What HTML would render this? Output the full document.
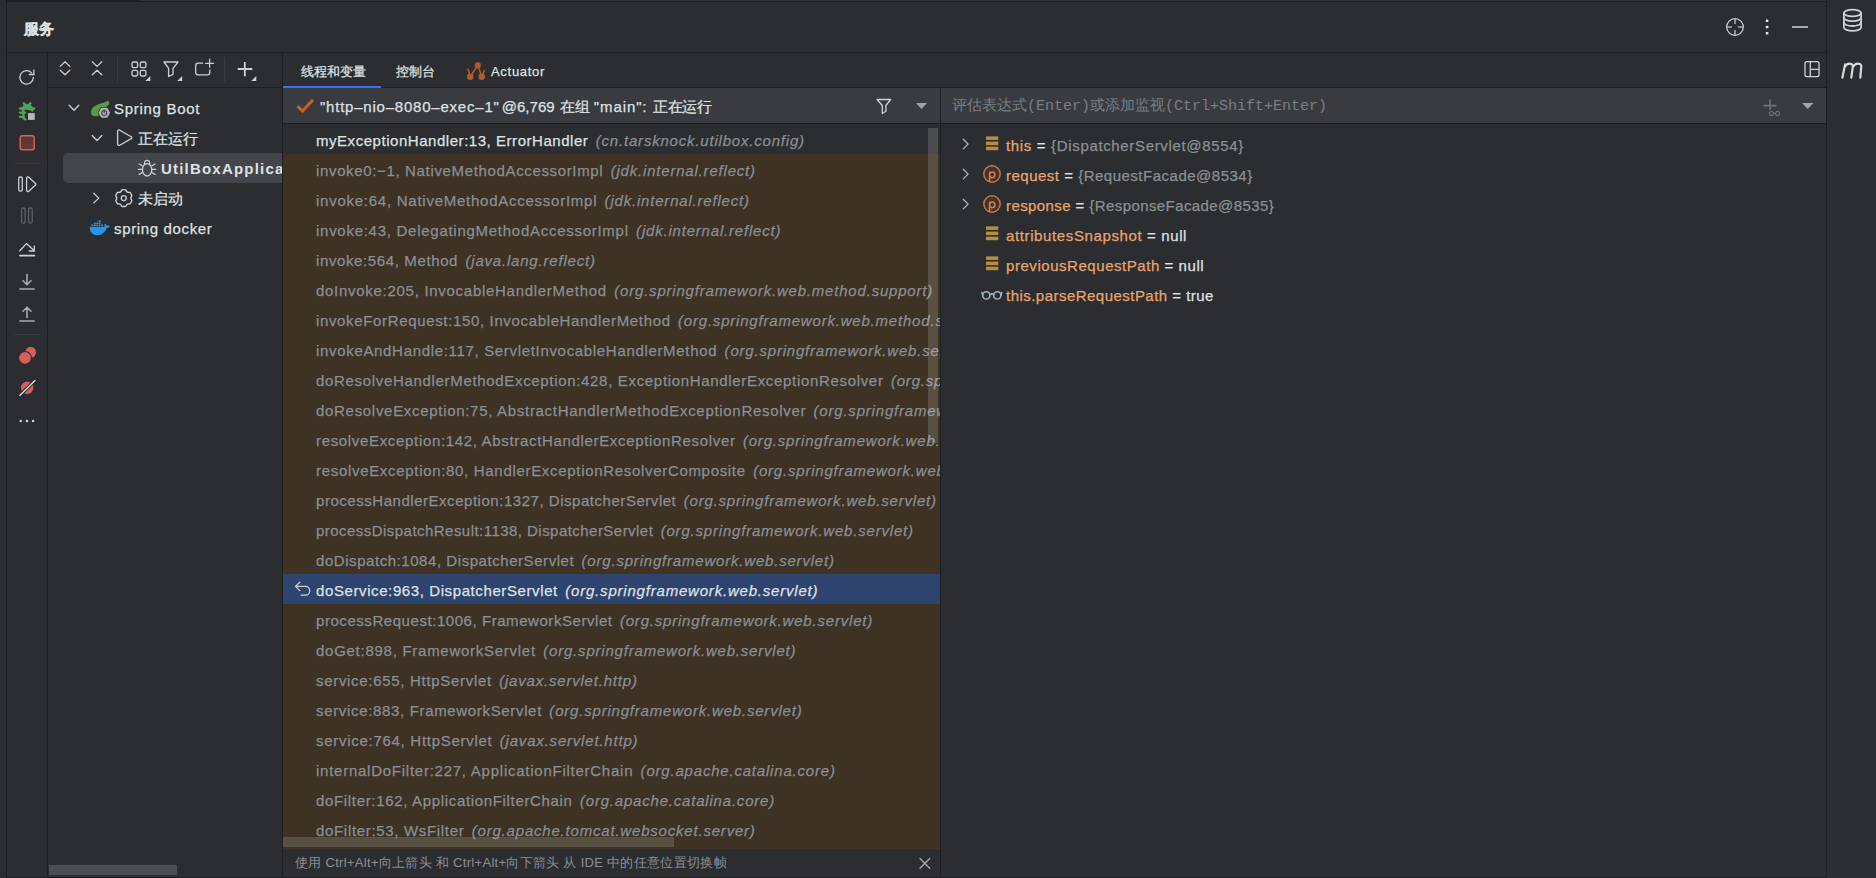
<!DOCTYPE html>
<html><head><meta charset="utf-8">
<style>
*{margin:0;padding:0;box-sizing:border-box}
html,body{width:1876px;height:878px;overflow:hidden;background:#2b2d30;font-family:"Liberation Sans",sans-serif;color:#dfe1e5}
.a{position:absolute}
.ln{position:absolute;background:#1e1f22}
.row{position:absolute;left:0;height:30px;width:657px;white-space:nowrap;font-size:15px;line-height:33px;padding-left:33px;letter-spacing:0.52px;-webkit-text-stroke:0.25px currentColor}
.lib{background:#3d3224;color:#8b8f95}
.pk{font-style:italic;letter-spacing:0.8px;margin-left:2.7px}
.sel{background:#2e436e;color:#dfe1e5}
.pk{color:#8b8f95}
.sel .pk{color:#dfe1e5}
.vr{position:absolute;left:65px;height:30px;line-height:30px;font-size:15px;white-space:nowrap;letter-spacing:0.55px;-webkit-text-stroke:0.25px currentColor}
.tl{-webkit-text-stroke:0.25px currentColor}
.vn{color:#e8a46e}
.vg{color:#8b8f95}
svg{position:absolute;overflow:visible}
.th{top:95px;font-size:15px;line-height:24px;white-space:nowrap;-webkit-text-stroke:0.25px currentColor}
</style></head><body>
<!-- borders -->
<div class="ln" style="left:6px;top:0;width:134px;height:2px"></div>
<div class="ln" style="left:140px;top:1px;width:1686px;height:1px"></div>
<div class="a" style="left:140px;top:0;width:1686px;height:1px;background:#323337"></div>
<div class="ln" style="left:6px;top:0;width:1px;height:878px"></div>
<div class="ln" style="left:1826px;top:0;width:1px;height:878px"></div>
<div class="ln" style="left:6px;top:52px;width:1820px;height:1px"></div>
<div class="ln" style="left:47px;top:52px;width:1px;height:826px"></div>
<div class="ln" style="left:47px;top:87px;width:235px;height:1px"></div>
<div class="ln" style="left:282px;top:52px;width:1px;height:826px"></div>
<div class="ln" style="left:282px;top:87px;width:1544px;height:1px"></div>
<div class="ln" style="left:940px;top:88px;width:1px;height:790px"></div>
<div class="ln" style="left:6px;top:877px;width:1820px;height:1px"></div>

<!-- header -->
<div class="a" style="left:23.5px;top:17.5px;font-size:14.5px;font-weight:bold;line-height:22px;-webkit-text-stroke:0.3px #dfe1e5">服务</div>

<!-- thread header -->
<div class="a" style="left:283px;top:88px;width:657px;height:35px;background:#393b40"></div>
<div class="ln" style="left:283px;top:123px;width:657px;height:1px"></div>
<!-- eval header -->
<div class="a" style="left:941px;top:88px;width:885px;height:35px;background:#393b40"></div>
<div class="ln" style="left:941px;top:123px;width:885px;height:1px"></div>

<!-- tabs -->
<div class="a" style="left:283px;top:86px;width:98px;height:2px;background:#3574f0"></div>
<div class="a tl" style="left:301px;top:62px;font-size:13px;line-height:20px">线程和变量</div>
<div class="a tl" style="left:396px;top:62px;font-size:13px;line-height:20px">控制台</div>
<div class="a tl" style="left:491px;top:62px;font-size:13px;line-height:20px;letter-spacing:0.7px">Actuator</div>

<!-- thread text -->
<div class="a th" style="left:320px;letter-spacing:0.78px">"http–nio–8080–exec–1"</div>
<div class="a th" style="left:501.7px;letter-spacing:0.05px">@6,769</div>
<div class="a th" style="left:559.8px">在组</div>
<div class="a th" style="left:593.8px;letter-spacing:0.9px">"main":</div>
<div class="a th" style="left:653px;letter-spacing:-0.5px">正在运行</div>

<!-- eval placeholder -->
<div class="a" style="left:952px;top:96px;font-size:15px;line-height:22px;color:#7a7e85;white-space:nowrap;font-family:'Liberation Mono',monospace">评估表达式(Enter)或添加监视(Ctrl+Shift+Enter)</div>

<!-- frames -->
<div class="a" id="frames" style="left:283px;top:124px;width:657px;height:725px;overflow:hidden">
<!--F-->
<div class="row " style="top:0px"><span style="letter-spacing:0.541px">myExceptionHandler:13, ErrorHandler</span> <span class="pk">(cn.tarsknock.utilbox.config)</span></div>
<div class="row lib" style="top:30px"><span style="letter-spacing:0.651px">invoke0:&minus;1, NativeMethodAccessorImpl</span> <span class="pk">(jdk.internal.reflect)</span></div>
<div class="row lib" style="top:60px"><span style="letter-spacing:0.746px">invoke:64, NativeMethodAccessorImpl</span> <span class="pk">(jdk.internal.reflect)</span></div>
<div class="row lib" style="top:90px"><span style="letter-spacing:0.728px">invoke:43, DelegatingMethodAccessorImpl</span> <span class="pk">(jdk.internal.reflect)</span></div>
<div class="row lib" style="top:120px"><span style="letter-spacing:0.620px">invoke:564, Method</span> <span class="pk">(java.lang.reflect)</span></div>
<div class="row lib" style="top:150px"><span style="letter-spacing:0.714px">doInvoke:205, InvocableHandlerMethod</span> <span class="pk">(org.springframework.web.method.support)</span></div>
<div class="row lib" style="top:180px"><span style="letter-spacing:0.650px">invokeForRequest:150, InvocableHandlerMethod</span> <span class="pk">(org.springframework.web.method.support)</span></div>
<div class="row lib" style="top:210px"><span style="letter-spacing:0.675px">invokeAndHandle:117, ServletInvocableHandlerMethod</span> <span class="pk">(org.springframework.web.servlet.mvc.method.annotation)</span></div>
<div class="row lib" style="top:240px"><span style="letter-spacing:0.675px">doResolveHandlerMethodException:428, ExceptionHandlerExceptionResolver</span> <span class="pk">(org.springframework.web.servlet.mvc.method.annotation)</span></div>
<div class="row lib" style="top:270px"><span style="letter-spacing:0.695px">doResolveException:75, AbstractHandlerMethodExceptionResolver</span> <span class="pk">(org.springframework.web.servlet.handler)</span></div>
<div class="row lib" style="top:300px"><span style="letter-spacing:0.667px">resolveException:142, AbstractHandlerExceptionResolver</span> <span class="pk">(org.springframework.web.servlet.handler)</span></div>
<div class="row lib" style="top:330px"><span style="letter-spacing:0.686px">resolveException:80, HandlerExceptionResolverComposite</span> <span class="pk">(org.springframework.web.servlet.handler)</span></div>
<div class="row lib" style="top:360px"><span style="letter-spacing:0.535px">processHandlerException:1327, DispatcherServlet</span> <span class="pk">(org.springframework.web.servlet)</span></div>
<div class="row lib" style="top:390px"><span style="letter-spacing:0.461px">processDispatchResult:1138, DispatcherServlet</span> <span class="pk">(org.springframework.web.servlet)</span></div>
<div class="row lib" style="top:420px"><span style="letter-spacing:0.556px">doDispatch:1084, DispatcherServlet</span> <span class="pk">(org.springframework.web.servlet)</span></div>
<div class="row sel" style="top:450px"><span style="letter-spacing:0.601px">doService:963, DispatcherServlet</span> <span class="pk">(org.springframework.web.servlet)</span></div>
<div class="row lib" style="top:480px"><span style="letter-spacing:0.556px">processRequest:1006, FrameworkServlet</span> <span class="pk">(org.springframework.web.servlet)</span></div>
<div class="row lib" style="top:510px"><span style="letter-spacing:0.732px">doGet:898, FrameworkServlet</span> <span class="pk">(org.springframework.web.servlet)</span></div>
<div class="row lib" style="top:540px"><span style="letter-spacing:0.690px">service:655, HttpServlet</span> <span class="pk">(javax.servlet.http)</span></div>
<div class="row lib" style="top:570px"><span style="letter-spacing:0.663px">service:883, FrameworkServlet</span> <span class="pk">(org.springframework.web.servlet)</span></div>
<div class="row lib" style="top:600px"><span style="letter-spacing:0.716px">service:764, HttpServlet</span> <span class="pk">(javax.servlet.http)</span></div>
<div class="row lib" style="top:630px"><span style="letter-spacing:0.748px">internalDoFilter:227, ApplicationFilterChain</span> <span class="pk">(org.apache.catalina.core)</span></div>
<div class="row lib" style="top:660px"><span style="letter-spacing:0.666px">doFilter:162, ApplicationFilterChain</span> <span class="pk">(org.apache.catalina.core)</span></div>
<div class="row lib" style="top:690px"><span style="letter-spacing:0.675px">doFilter:53, WsFilter</span> <span class="pk">(org.apache.tomcat.websocket.server)</span></div>
<div class="row lib" style="top:720px"><span style="letter-spacing:0.620px">doFilter:189, ApplicationFilterChain</span> <span class="pk">(org.apache.catalina.core)</span></div>
<!--/F-->
</div>

<div class="a" style="left:928px;top:128px;width:10px;height:315px;background:rgba(255,255,255,0.15)"></div>
<div class="a" style="left:283px;top:837px;width:391px;height:10px;background:rgba(255,255,255,0.15)"></div>
<!-- hint -->
<div class="a" style="left:295px;top:853px;font-size:13px;line-height:20px;color:#8b8f95;white-space:nowrap;letter-spacing:0.3px">使用 Ctrl+Alt+向上箭头 和 Ctrl+Alt+向下箭头 从 IDE 中的任意位置切换帧</div>

<!-- tree -->
<div class="a" style="left:63px;top:153px;width:219px;height:30px;background:#43454a;border-radius:5px 0 0 5px"></div>
<div class="a tl" style="left:114px;top:94px;font-size:15px;line-height:30px;letter-spacing:0.7px;white-space:nowrap">Spring Boot</div>
<div class="a tl" style="left:138px;top:124px;font-size:15px;line-height:30px;white-space:nowrap">正在运行</div>
<div class="a" style="left:161px;top:153px;width:121px;overflow:hidden;font-size:15px;line-height:32px;font-weight:bold;letter-spacing:1.2px;white-space:nowrap">UtilBoxApplication</div>
<div class="a tl" style="left:138px;top:184px;font-size:15px;line-height:30px;white-space:nowrap">未启动</div>
<div class="a tl" style="left:114px;top:214px;font-size:15px;line-height:30px;letter-spacing:0.65px;white-space:nowrap">spring docker</div>
<div class="a" style="left:49px;top:865px;width:128px;height:10px;background:#4b4d50"></div>

<!-- variables -->
<div class="a" id="vars" style="left:941px;top:124px;width:885px;height:400px">
<div class="vr" style="top:7px;letter-spacing:0.66px"><span class="vn">this</span> = <span class="vg">{DispatcherServlet@8554}</span></div>
<div class="vr" style="top:37px;letter-spacing:0.5px"><span class="vn">request</span> = <span class="vg">{RequestFacade@8534}</span></div>
<div class="vr" style="top:67px;letter-spacing:0.41px"><span class="vn">response</span> = <span class="vg">{ResponseFacade@8535}</span></div>
<div class="vr" style="top:97px;letter-spacing:0.62px"><span class="vn">attributesSnapshot</span> = null</div>
<div class="vr" style="top:127px"><span class="vn">previousRequestPath</span> = null</div>
<div class="vr" style="top:157px;letter-spacing:0.47px"><span class="vn">this.parseRequestPath</span> = true</div>
</div>

<svg class="ic" width="1876" height="878" viewBox="0 0 1876 878" style="position:absolute;left:0;top:0;pointer-events:none" fill="none" stroke-linecap="round" stroke-linejoin="round">
<g stroke="#ced0d6" stroke-width="1.3">
<!-- header crosshair -->
<circle cx="1735" cy="27" r="8.3"/>
<path d="M1735 19v5M1735 30v5M1727 27h5M1738 27h5" stroke="#a8abb0" stroke-width="1.6" stroke-linecap="butt"/>
</g>
<g fill="#dfe1e5">
<rect x="1765.8" y="19.5" width="2.6" height="2.6" rx="0.6"/>
<rect x="1765.8" y="25.7" width="2.6" height="2.6" rx="0.6"/>
<rect x="1765.8" y="32" width="2.6" height="2.6" rx="0.6"/>
</g>
<rect x="1792" y="26" width="16" height="2" fill="#a8abb0"/>
<!-- database -->
<g stroke="#ced0d6" stroke-width="1.8">
<ellipse cx="1852.5" cy="13" rx="8.6" ry="3.3"/>
<path d="M1843.9 13v14.5c0 1.9 3.9 3.4 8.6 3.4s8.6-1.5 8.6-3.4V13"/>
<path d="M1843.9 17.8c0 1.9 3.9 3.4 8.6 3.4s8.6-1.5 8.6-3.4M1843.9 22.6c0 1.9 3.9 3.4 8.6 3.4s8.6-1.5 8.6-3.4"/>
</g>
<!-- m -->
<path d="M1842.4 77.6L1845.1 64.3M1844.5 67.2c1.4-2.6 3.3-3.6 5.2-3.6c2.5 0 3.5 1.5 3 4L1851.3 77.6M1852.8 67c1.4-2.4 3.3-3.4 5.2-3.4c2.6 0 3.7 1.6 3.2 4.1L1860.3 77.6" stroke="#d6d8dc" stroke-width="2.2"/>

<!-- left toolbar -->
<g stroke="#ced0d6" stroke-width="1.3">
<path d="M33.3 77.5a6.7 6.7 0 1 1-1.7-4.6"/>
<path d="M33.9 69.9v4.6h-4.6" stroke-linejoin="miter"/>
</g>
<!-- debug green bug -->
<g stroke="#4fa557" stroke-width="2.3" fill="none" stroke-linecap="round">
<path d="M23.8 103.3L26.2 105.6M30.4 103.3L28 105.6"/>
<path d="M22.4 109.6c0-2.6 2.2-4.2 4.8-4.2s5 1.6 5 4.2v1" fill="#4fa557"/>
<path d="M23.4 109v8c0 1.3.9 2.1 2.2 2.5"/>
<path d="M19.9 108.5h2.8M31.8 108.5h2.4M19.9 112.6h5.3M19.9 116.8h3.8"/>
</g>
<rect x="28" y="113.1" width="6.7" height="6.8" fill="#b4b6ba"/>
<!-- stop -->
<rect x="20.2" y="135.8" width="14" height="14" rx="2.2" fill="#5e3838" stroke="#db5c5c" stroke-width="1.5"/>
<path d="M15 163.5h25" stroke="#393b40" stroke-width="1"/>
<!-- resume -->
<g stroke="#ced0d6" stroke-width="1.3">
<rect x="18.7" y="177" width="3.6" height="14.2" rx="1.6"/>
<path d="M26.6 178.2c0-1.1 1-1.6 1.9-1.1l7 6.4c.6.6.6 1 0 1.5l-7 6.4c-.9.6-1.9.1-1.9-1.1z"/>
</g>
<g stroke="#5f6166" stroke-width="1.3">
<rect x="21.6" y="208" width="3.6" height="15.2" rx="1.6"/>
<rect x="28.6" y="208" width="3.6" height="15.2" rx="1.6"/>
</g>
<!-- step over -->
<g stroke="#ced0d6" stroke-width="1.3">
<path d="M19.8 250.8l6.6-7.2l7.6 7"/>
<path d="M34.3 246v5h-5" stroke-linejoin="miter"/>
<path d="M20 255.6h14.3" stroke-width="1.8"/>
</g>
<!-- step into / out -->
<g stroke="#a8abb0" stroke-width="1.6">
<path d="M27 274.5v10M23 280.7l4 4l4-4M20 289h14.2"/>
<path d="M27 317.5v-10M23 311.2l4-4l4 4M20 321h14.2"/>
</g>
<path d="M15 334.5h25" stroke="#393b40" stroke-width="1"/>
<!-- breakpoints -->
<circle cx="30.6" cy="352.3" r="5.5" fill="#db5c5c"/>
<circle cx="25" cy="357.9" r="7" fill="#2b2d30"/>
<circle cx="25" cy="357.9" r="5.9" fill="#db5c5c"/>
<circle cx="27.1" cy="387.8" r="6.2" fill="#db5c5c"/>
<path d="M19.8 395.5L35 380.5" stroke="#2b2d30" stroke-width="3.4"/>
<path d="M19.8 395.5L35 380.5" stroke="#dfe1e5" stroke-width="1.3"/>
<g fill="#ced0d6"><circle cx="20.8" cy="421" r="1.3"/><circle cx="27" cy="421" r="1.3"/><circle cx="33.1" cy="421" r="1.3"/></g>

<!-- tree toolbar -->
<g stroke="#ced0d6" stroke-width="1.3">
<path d="M60.2 66.4L65 61.8l4.8 4.6M60.2 70.3L65 74.8l4.8-4.5"/>
<path d="M92.3 61.8L97 66.4l4.8-4.6M92.3 74.8L97 70.3l4.8 4.5"/>
<rect x="132" y="62" width="5.6" height="5.6" rx="1.4"/>
<rect x="140.3" y="62" width="5.6" height="5.6" rx="1.4"/>
<rect x="132" y="70.4" width="5.6" height="5.6" rx="1.4"/>
<rect x="140.3" y="70.4" width="5.6" height="5.6" rx="1.4"/>
<path d="M164 62h14l-5 6.4v5.9l-4.4 2.2v-8.1z"/>
<path d="M202.6 63.2h-4.6c-1.3 0-2.3 1-2.3 2.3v7.1c0 1.3 1 2.3 2.3 2.3h9.5c1.3 0 2.3-1 2.3-2.3v-2.8M209.6 59.2v8M205.6 63.3h8"/>
<path d="M244.8 62v14.2M237.7 69h14.6" stroke-width="1.8" stroke-linecap="butt"/>
</g>
<g fill="#ced0d6"><path d="M150.3 76v5h-5z"/><path d="M182.2 76v5h-5z"/><path d="M256.3 76v5h-5z"/></g>
<path d="M117.5 57.5v24M224.5 57.5v24" stroke="#393b40" stroke-width="1"/>

<!-- tree -->
<g stroke="#ced0d6" stroke-width="1.3">
<path d="M69.2 105.3l4.8 5l4.8-5"/>
<path d="M92.2 135.5l4.8 5l4.8-5"/>
<path d="M117.6 131.5c0-1.3 1.2-1.9 2.2-1.3l11.4 6.6c.9.5.9 1.3 0 1.8l-11.4 6.6c-1 .6-2.2 0-2.2-1.3z"/>
<path d="M93.8 193.3l5 4.8l-5 4.8"/>
</g>
<!-- spring leaf -->
<path d="M108 100.5C104 103.5 99 103.3 95 106C92 108 90.8 110.5 91 113C91.3 115.3 93.2 116.5 96 116.3L100.5 115.5L103 107.5C106.5 107 109 105.5 109.2 103C109.3 102 108.8 101.2 108 100.5Z" fill="#5b9a42"/>
<path d="M110.8 112.8l-3.3 5.7h-6.6l-3.3-5.7l3.3-5.7h6.6z" fill="#2b2d30"/>
<path d="M110.1 112.8l-2.9 5h-5.9l-2.9-5l2.9-5h5.9z" fill="#a9b4bd"/>
<circle cx="104.2" cy="113" r="2.5" stroke="#3f4245" stroke-width="1.1" fill="none"/>
<path d="M104.2 109.9v2.8" stroke="#3f4245" stroke-width="1.1"/>
<!-- bug outline -->
<g stroke="#ced0d6" stroke-width="1.3">
<ellipse cx="147.1" cy="169.8" rx="4.7" ry="6.2"/>
<path d="M144.4 163.9c0-2.1 1.2-3.6 2.7-3.6s2.7 1.5 2.7 3.6"/>
<path d="M139.2 164l3 1.8M155 164l-3 1.8M138.5 169.4h3.9M155.7 169.4h-3.9M139.2 174.4l3.2-1.9M155 174.4l-3.2-1.9"/>
</g>
<!-- gear -->
<g stroke="#ced0d6" stroke-width="1.3">
<path d="M121.77 189.95A8.4 8.4 0 0 1 125.83 189.95Q126.75 192.99 129.84 192.26A8.4 8.4 0 0 1 131.87 195.78Q129.70 198.10 131.87 200.42A8.4 8.4 0 0 1 129.84 203.94Q126.75 203.21 125.83 206.25A8.4 8.4 0 0 1 121.77 206.25Q120.85 203.21 117.76 203.94A8.4 8.4 0 0 1 115.73 200.42Q117.90 198.10 115.73 195.78A8.4 8.4 0 0 1 117.76 192.26Q120.85 192.99 121.77 189.95Z"/>
<circle cx="123.8" cy="198.1" r="2.5"/>
</g>
<!-- docker -->
<g fill="#2496ed">
<path d="M89.8 227h14.6l.4-3.6c.9.4 1.6 1.1 1.9 2.1c1.2-.3 2.4 0 3.3.8c-.8 1-2 1.6-3.3 1.6c-1.4 4.6-5.3 7.2-10.2 7.2c-4.2 0-6.7-3.4-6.7-8.1z"/>
<rect x="91.4" y="224.4" width="2" height="1.9" rx=".5"/><rect x="93.8" y="224.4" width="2" height="1.9" rx=".5"/><rect x="96.2" y="224.4" width="2" height="1.9" rx=".5"/><rect x="98.6" y="224.4" width="2" height="1.9" rx=".5"/><rect x="101" y="224.4" width="2" height="1.9" rx=".5"/>
<rect x="93.8" y="222.4" width="2" height="1.6" rx=".5"/><rect x="96.2" y="222.4" width="2" height="1.6" rx=".5"/><rect x="98.6" y="222.4" width="2" height="1.6" rx=".5"/>
<rect x="98.6" y="220.3" width="2" height="1.8" rx=".5"/>
</g>

<!-- actuator -->
<g stroke="#b35a2a" stroke-width="1.6" fill="none">
<path d="M470.3 76.7L477.8 65.1L481.7 76.7M468 69l2.3 7.7M484.4 70.4l-2.7 6.3"/>
</g>
<g fill="#b35a2a"><circle cx="477.8" cy="65.3" r="3.1"/><circle cx="470.3" cy="76.7" r="3.3"/><circle cx="481.7" cy="76.7" r="3.3"/></g>

<!-- thread header -->
<path d="M297.5 106.2l5 4.8l10.5-11.3" stroke="#c75f28" stroke-width="3" stroke-linecap="butt" stroke-linejoin="miter"/>
<path d="M877 99.5h13.7l-4.8 6v5.8l-3.6 2.2v-8z" stroke="#ced0d6" stroke-width="1.3"/>
<path d="M916 103h11l-5.5 6z" fill="#a0a3a8"/>

<!-- return arrow -->
<g stroke="#ced0d6" stroke-width="1.3">
<path d="M299.8 582.2l-4.4 4.2l4.4 4.2M295.6 586.4h10c2.3 0 4.1 1.9 4.1 4.3s-1.8 4.5-4.1 4.5h-4.5"/>
</g>
<!-- close x -->
<path d="M920 858.5l9.7 9.7M929.7 858.5L920 868.2" stroke="#a8abb0" stroke-width="1.3"/>

<!-- layout icon -->
<g stroke="#ced0d6" stroke-width="1.3">
<rect x="1805" y="61.6" width="14" height="15" rx="2.2"/>
<path d="M1810.3 61.6v15M1810.3 69.3h8.7"/>
</g>
<!-- add watch -->
<g stroke="#6f737a" stroke-width="1.6">
<path d="M1770 100v9.5M1764 105.6h12"/>
<circle cx="1771.4" cy="113.5" r="2" stroke-width="1.1"/><circle cx="1777.6" cy="113.5" r="2" stroke-width="1.1"/>
<path d="M1773.4 113.3h2.2" stroke-width="1"/>
</g>
<path d="M1802 103h11.5l-5.75 6z" fill="#a0a3a8"/>

<!-- variables -->
<g stroke="#b4b7bc" stroke-width="1.3">
<path d="M963.3 139.3l4.8 4.8l-4.8 4.8M963.3 169.3l4.8 4.8l-4.8 4.8M963.3 199.3l4.8 4.8l-4.8 4.8"/>
</g>
<g fill="#b78f3c">
<rect x="986" y="136.4" width="12.3" height="3.5"/><rect x="986" y="141.6" width="12.3" height="3.5"/><rect x="986" y="146.7" width="12.3" height="3.5"/>
<rect x="986" y="226.4" width="12.3" height="3.5"/><rect x="986" y="231.6" width="12.3" height="3.5"/><rect x="986" y="236.7" width="12.3" height="3.5"/>
<rect x="986" y="256.4" width="12.3" height="3.5"/><rect x="986" y="261.6" width="12.3" height="3.5"/><rect x="986" y="266.7" width="12.3" height="3.5"/>
</g>
<g stroke="#c9794a" stroke-width="1.4" fill="#45332a">
<circle cx="992" cy="174" r="8.2"/><circle cx="992" cy="204" r="8.2"/>
</g>
<g stroke="#d08050" stroke-width="1.5" fill="none">
<path d="M989.6 172.2v8.3M989.6 174.8c0-1.7 1.1-2.9 2.6-2.9s2.7 1.2 2.7 2.9s-1.2 2.9-2.7 2.9s-2.6-1.2-2.6-2.9"/>
<path d="M989.6 202.2v8.3M989.6 204.8c0-1.7 1.1-2.9 2.6-2.9s2.7 1.2 2.7 2.9s-1.2 2.9-2.7 2.9s-2.6-1.2-2.6-2.9"/>
</g>
<g stroke="#a3b1bf" stroke-width="1.6">
<circle cx="986.3" cy="295.4" r="3.6"/><circle cx="997.3" cy="295.4" r="3.6"/>
<path d="M989.9 294.5c1.2-.8 2.6-.8 3.8 0M982.6 295l-0.6-2.5M1001 295l.6-2.5"/>
</g>
</svg>
</body></html>
